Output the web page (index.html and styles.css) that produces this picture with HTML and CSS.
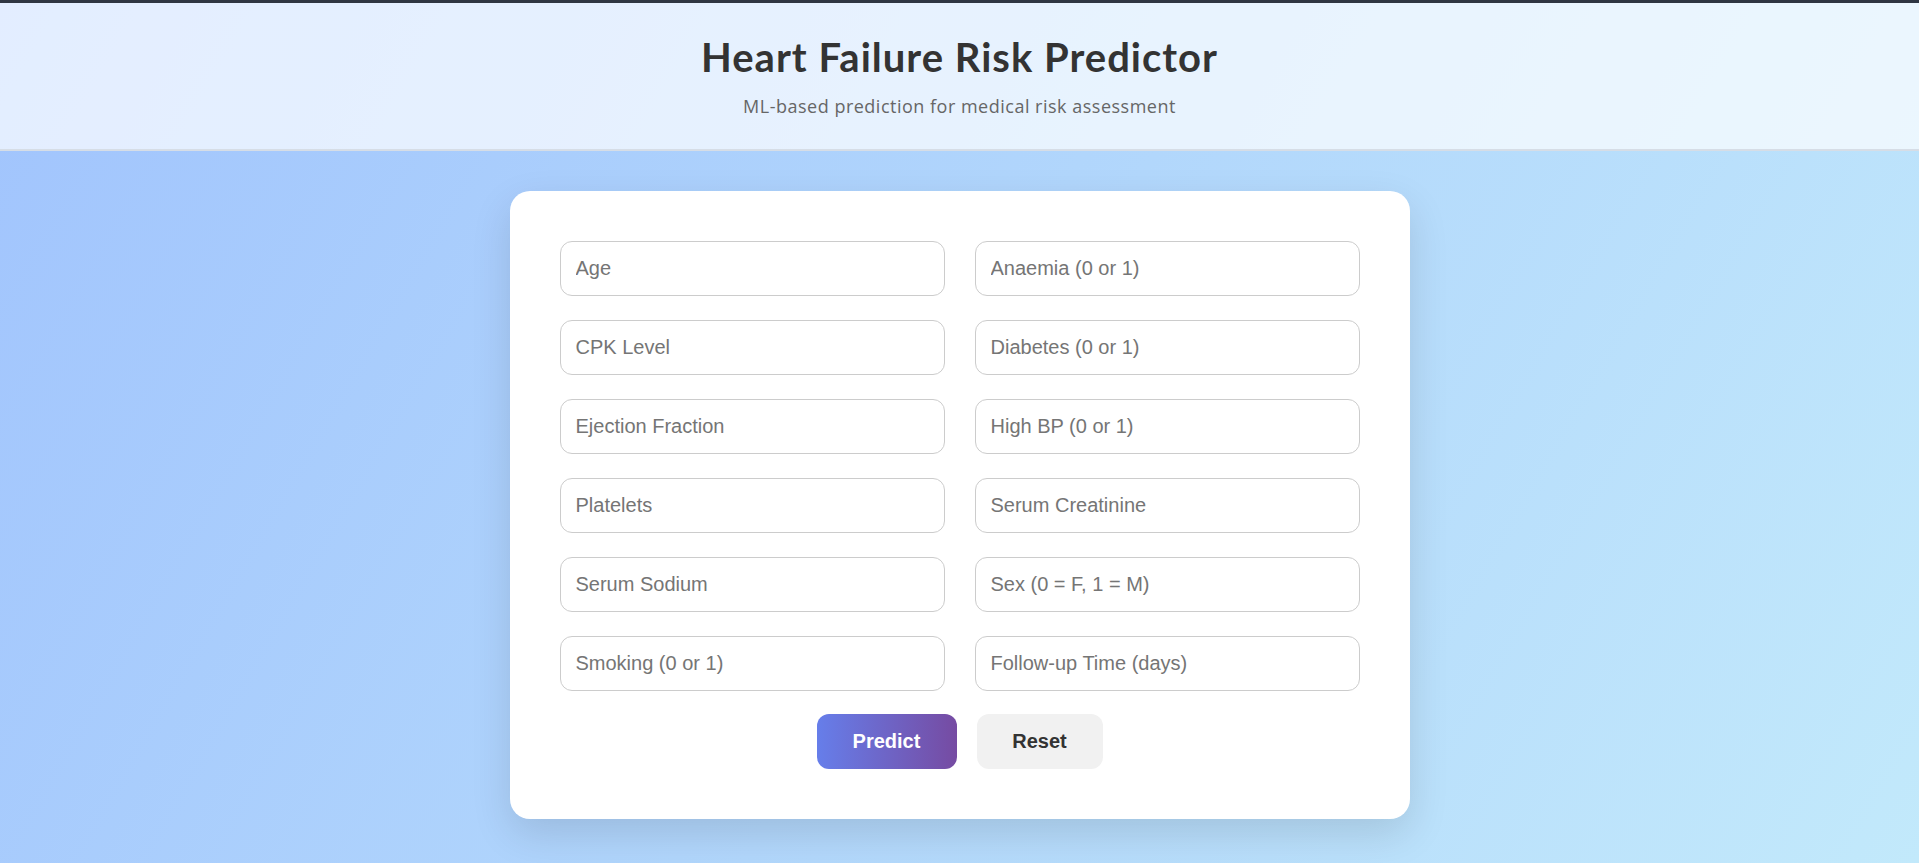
FILE: index.html
```html
<!DOCTYPE html>
<html lang="en">
<head>
<meta charset="utf-8">
<title>Heart Failure Risk Predictor</title>
<link rel="stylesheet" href="styles.css">
</head>
<body>
<div class="topbar"></div>
<header class="header">
  <h1 class="title">Heart Failure Risk Predictor</h1>
  <p class="subtitle">ML-based prediction for medical risk assessment</p>
</header>
<main class="main">
  <form class="card">
    <div class="grid">
      <input class="field" type="text" placeholder="Age">
      <input class="field" type="text" placeholder="Anaemia (0 or 1)">
      <input class="field" type="text" placeholder="CPK Level">
      <input class="field" type="text" placeholder="Diabetes (0 or 1)">
      <input class="field" type="text" placeholder="Ejection Fraction">
      <input class="field" type="text" placeholder="High BP (0 or 1)">
      <input class="field" type="text" placeholder="Platelets">
      <input class="field" type="text" placeholder="Serum Creatinine">
      <input class="field" type="text" placeholder="Serum Sodium">
      <input class="field" type="text" placeholder="Sex (0 = F, 1 = M)">
      <input class="field" type="text" placeholder="Smoking (0 or 1)">
      <input class="field" type="text" placeholder="Follow-up Time (days)">
    </div>
    <div class="actions">
      <button class="btn btn-primary" type="button">Predict</button>
      <button class="btn btn-secondary" type="reset">Reset</button>
    </div>
  </form>
</main>
</body>
</html>
```
FILE: styles.css
```css
html, body {
  margin: 0;
  padding: 0;
}
body {
  min-height: 100vh;
  background: linear-gradient(120deg, #a1c4fd 0%, #c2e9fb 100%);
  font-family: "Lato", "Noto Sans", sans-serif;
}
.topbar {
  height: 3px;
  background: #2f3642;
}
.header {
  background: rgba(255, 255, 255, 0.7);
  border-bottom: 2px solid #d6dde6;
  text-align: center;
  padding: 30px 0 31px;
}
.title {
  margin: 0;
  font-family: "Lato", "Noto Sans", sans-serif;
  font-size: 40px;
  line-height: 48px;
  font-weight: 700;
  letter-spacing: 1px;
  color: #333;
}
.subtitle {
  margin: 13px 0 0;
  font-family: "Open Sans", "Noto Sans", sans-serif;
  font-size: 18px;
  line-height: 24px;
  letter-spacing: 0.5px;
  color: #666;
}
.main {
  display: flex;
  justify-content: center;
  padding: 40px 0 40px;
}
.card {
  width: 900px;
  box-sizing: border-box;
  background: #fff;
  border-radius: 20px;
  padding: 50px;
  box-shadow: 0 15px 40px rgba(0, 0, 0, 0.12);
}
.grid {
  display: grid;
  grid-template-columns: 1fr 1fr;
  column-gap: 30px;
  row-gap: 24px;
}
.field {
  display: block;
  width: 100%;
  box-sizing: border-box;
  height: 55px;
  padding: 15px;
  border: 1px solid #ccc;
  border-radius: 12px;
  font-family: "Liberation Sans", Arial, sans-serif;
  font-size: 20px;
  color: #333;
  background: #fff;
  outline: none;
}
.field::placeholder {
  color: #757575;
}
.actions {
  display: flex;
  justify-content: center;
  gap: 20px;
  margin-top: 23px;
}
.btn {
  height: 55px;
  padding: 0;
  border: none;
  border-radius: 12px;
  font-family: "Liberation Sans", Arial, sans-serif;
  font-size: 20px;
  font-weight: 700;
  cursor: pointer;
}
.btn-primary {
  width: 140px;
  background: linear-gradient(90deg, #667eea 0%, #764ba2 100%);
  color: #fff;
}
.btn-secondary {
  width: 126px;
  background: #f1f1f1;
  color: #333;
}
```
